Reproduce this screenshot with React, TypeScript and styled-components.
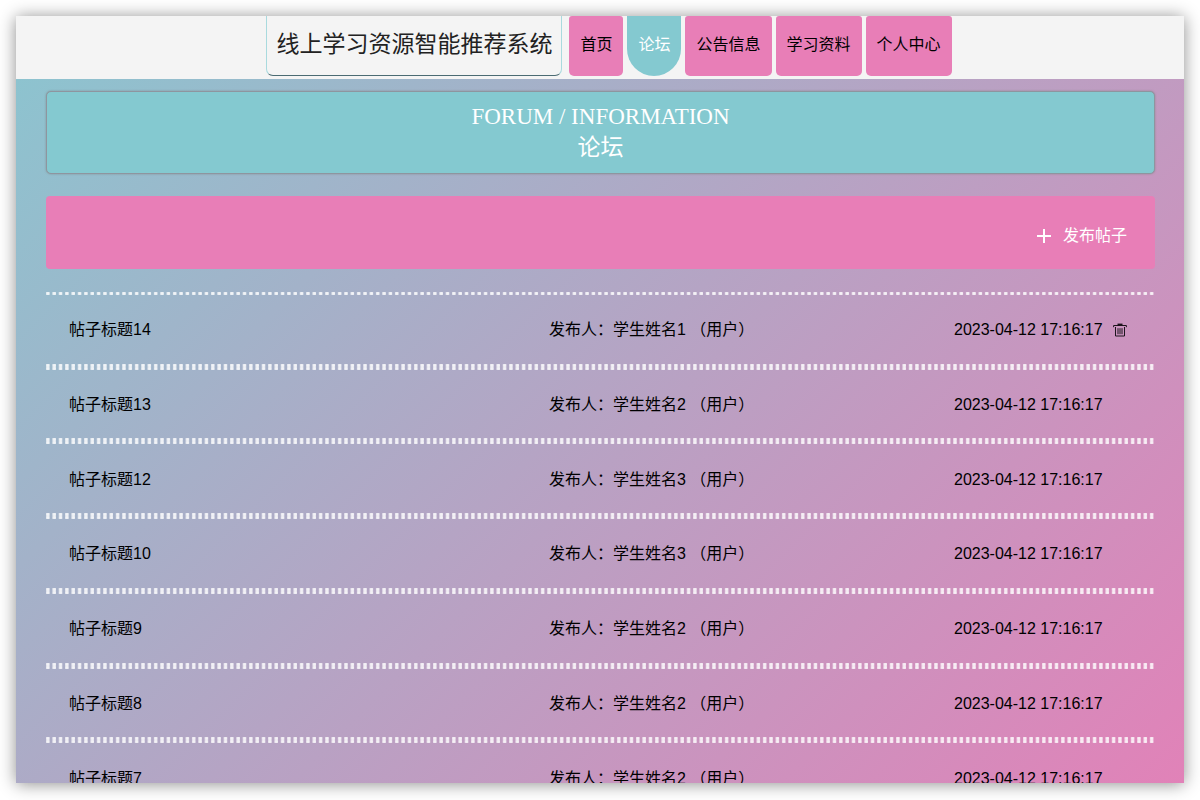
import React from "react";
import styled, { createGlobalStyle } from "styled-components";

const teal = "#84c9d0";
const pink = "#e87eb7";
const sans = `"Liberation Sans", "Noto Sans CJK SC", sans-serif`;
const serif = `"Liberation Serif", "Noto Sans CJK SC", serif`;

const GlobalStyle = createGlobalStyle`
  *, *::before, *::after { box-sizing: border-box; }
  body {
    margin: 0;
    background: #fff;
    color: #000;
    font: 16px/24px ${sans};
  }
  button { font: inherit; }
`;

const Page = styled.div`
  height: 100vh;
  padding: 16px 16px 17px;
`;

const Frame = styled.div`
  display: flex;
  flex-direction: column;
  height: 100%;
  overflow: hidden;
  box-shadow: 0 1px 16px rgba(0, 0, 0, 0.45);
`;

const Header = styled.header`
  display: flex;
  flex: none;
  justify-content: center;
  gap: 7px;
  padding: 0 0 3px 18px;
  background: #f4f4f4;
`;

const Brand = styled.h1`
  display: flex;
  align-items: center;
  height: 60px;
  margin: 0;
  padding: 0 9px 4px;
  border: 1px solid #a9dade;
  border-top: 0;
  border-bottom-color: #4b6b72;
  border-radius: 0 0 7px 7px;
  color: #222;
  font-size: 23px;
  font-weight: 400;
  white-space: nowrap;
`;

const Nav = styled.nav`
  display: flex;
  gap: 4px;
`;

const NavLink = styled.a<{ $active?: boolean }>`
  display: flex;
  align-items: center;
  height: 60px;
  padding: 0 11px 2px;
  border-radius: ${(p) => (p.$active ? "0 0 27px 27px" : "3px 3px 5px 5px")};
  background: ${(p) => (p.$active ? teal : pink)};
  color: ${(p) => (p.$active ? "#fff" : "#000")};
  text-decoration: none;
  white-space: nowrap;
`;

const Content = styled.main`
  flex: 1;
  min-height: 0;
  overflow: hidden;
  padding: 12px 29px 0 30px;
  background: linear-gradient(135deg, #8dc3cf, #e182b8);
`;

const Banner = styled.section`
  padding: 10px 10px 9px;
  border: 1px solid #8e959f;
  border-radius: 5px;
  background: ${teal};
  box-shadow: 0 0 2px rgba(128, 128, 128, 0.8);
  color: #fff;
  text-align: center;
`;

const BannerTitle = styled.h2`
  margin: 0;
  font: 400 23px/30px ${serif};
`;

const BannerSubtitle = styled.p`
  margin: 0;
  font: 400 23px/32px ${serif};
`;

const Toolbar = styled.div`
  display: flex;
  align-items: center;
  justify-content: flex-end;
  height: 73px;
  margin: 22px 0 23px;
  padding: 6px 28px 0;
  border-radius: 4px;
  background: ${pink};
`;

const PublishButton = styled.button`
  display: flex;
  align-items: center;
  gap: 12px;
  padding: 0;
  border: 0;
  background: none;
  color: #fff;
  cursor: pointer;
`;

const PostList = styled.ul`
  display: grid;
  grid-auto-rows: 1fr;
  height: 523px;
  margin: 0;
  padding: 0;
  list-style: none;
`;

const dots = "radial-gradient(circle at 2px 50%, rgba(255, 255, 255, 0.85) 1px, rgba(255, 255, 255, 0.6) 2px, transparent 2px)";

const Post = styled.li`
  display: grid;
  grid-template-columns: 480fr 405fr 178fr;
  align-items: center;
  padding: 2px 23px 0;
  background-image: ${dots}, ${dots};
  background-position: left top, left bottom;
  background-repeat: repeat-x;
  background-size: calc((100% + 3px) / 175) 3px;
  white-space: nowrap;
`;

const PostLink = styled.a`
  color: inherit;
  text-decoration: none;
`;

const PostDate = styled.div`
  display: flex;
  align-items: center;
  gap: 10px;
`;

const DeleteButton = styled.button`
  display: flex;
  padding: 0;
  border: 0;
  background: none;
  color: #1c141c;
  cursor: pointer;
`;

const PlusIcon = () => (
  <svg width="14" height="14" viewBox="0 0 14 14" stroke="currentColor" strokeWidth="2" aria-hidden="true">
    <path d="M7 0v14M0 7h14" />
  </svg>
);

const TrashIcon = () => (
  <svg width="14" height="14" viewBox="0 0 14 14" fill="none" stroke="currentColor" aria-hidden="true">
    <path d="M4.5 1.3h5" strokeWidth="1.4" />
    <path d="M0.6 4.2V2.5h12.8v1.7" />
    <path d="M2.5 4v9h9V4M5 5.2v6M7 5.2v6M9 5.2v6" />
  </svg>
);

const navItems = ["首页", "论坛", "公告信息", "学习资料", "个人中心"];

const posts = [
  { title: "帖子标题14", author: "学生姓名1", own: true },
  { title: "帖子标题13", author: "学生姓名2" },
  { title: "帖子标题12", author: "学生姓名3" },
  { title: "帖子标题10", author: "学生姓名3" },
  { title: "帖子标题9", author: "学生姓名2" },
  { title: "帖子标题8", author: "学生姓名2" },
  { title: "帖子标题7", author: "学生姓名2" },
];

export default function App() {
  return (
    <Page>
      <GlobalStyle />
      <Frame>
        <Header>
          <Brand>线上学习资源智能推荐系统</Brand>
          <Nav>
            {navItems.map((item) => (
              <NavLink key={item} href="#" $active={item === "论坛"}>
                {item}
              </NavLink>
            ))}
          </Nav>
        </Header>
        <Content>
          <Banner>
            <BannerTitle>FORUM / INFORMATION</BannerTitle>
            <BannerSubtitle>论坛</BannerSubtitle>
          </Banner>
          <Toolbar>
            <PublishButton type="button">
              <PlusIcon />
              发布帖子
            </PublishButton>
          </Toolbar>
          <PostList>
            {posts.map((post) => (
              <Post key={post.title}>
                <PostLink href="#">{post.title}</PostLink>
                <span>{`发布人：${post.author} （用户）`}</span>
                <PostDate>
                  <time>2023-04-12 17:16:17</time>
                  {post.own && (
                    <DeleteButton type="button" aria-label="删除">
                      <TrashIcon />
                    </DeleteButton>
                  )}
                </PostDate>
              </Post>
            ))}
          </PostList>
        </Content>
      </Frame>
    </Page>
  );
}
